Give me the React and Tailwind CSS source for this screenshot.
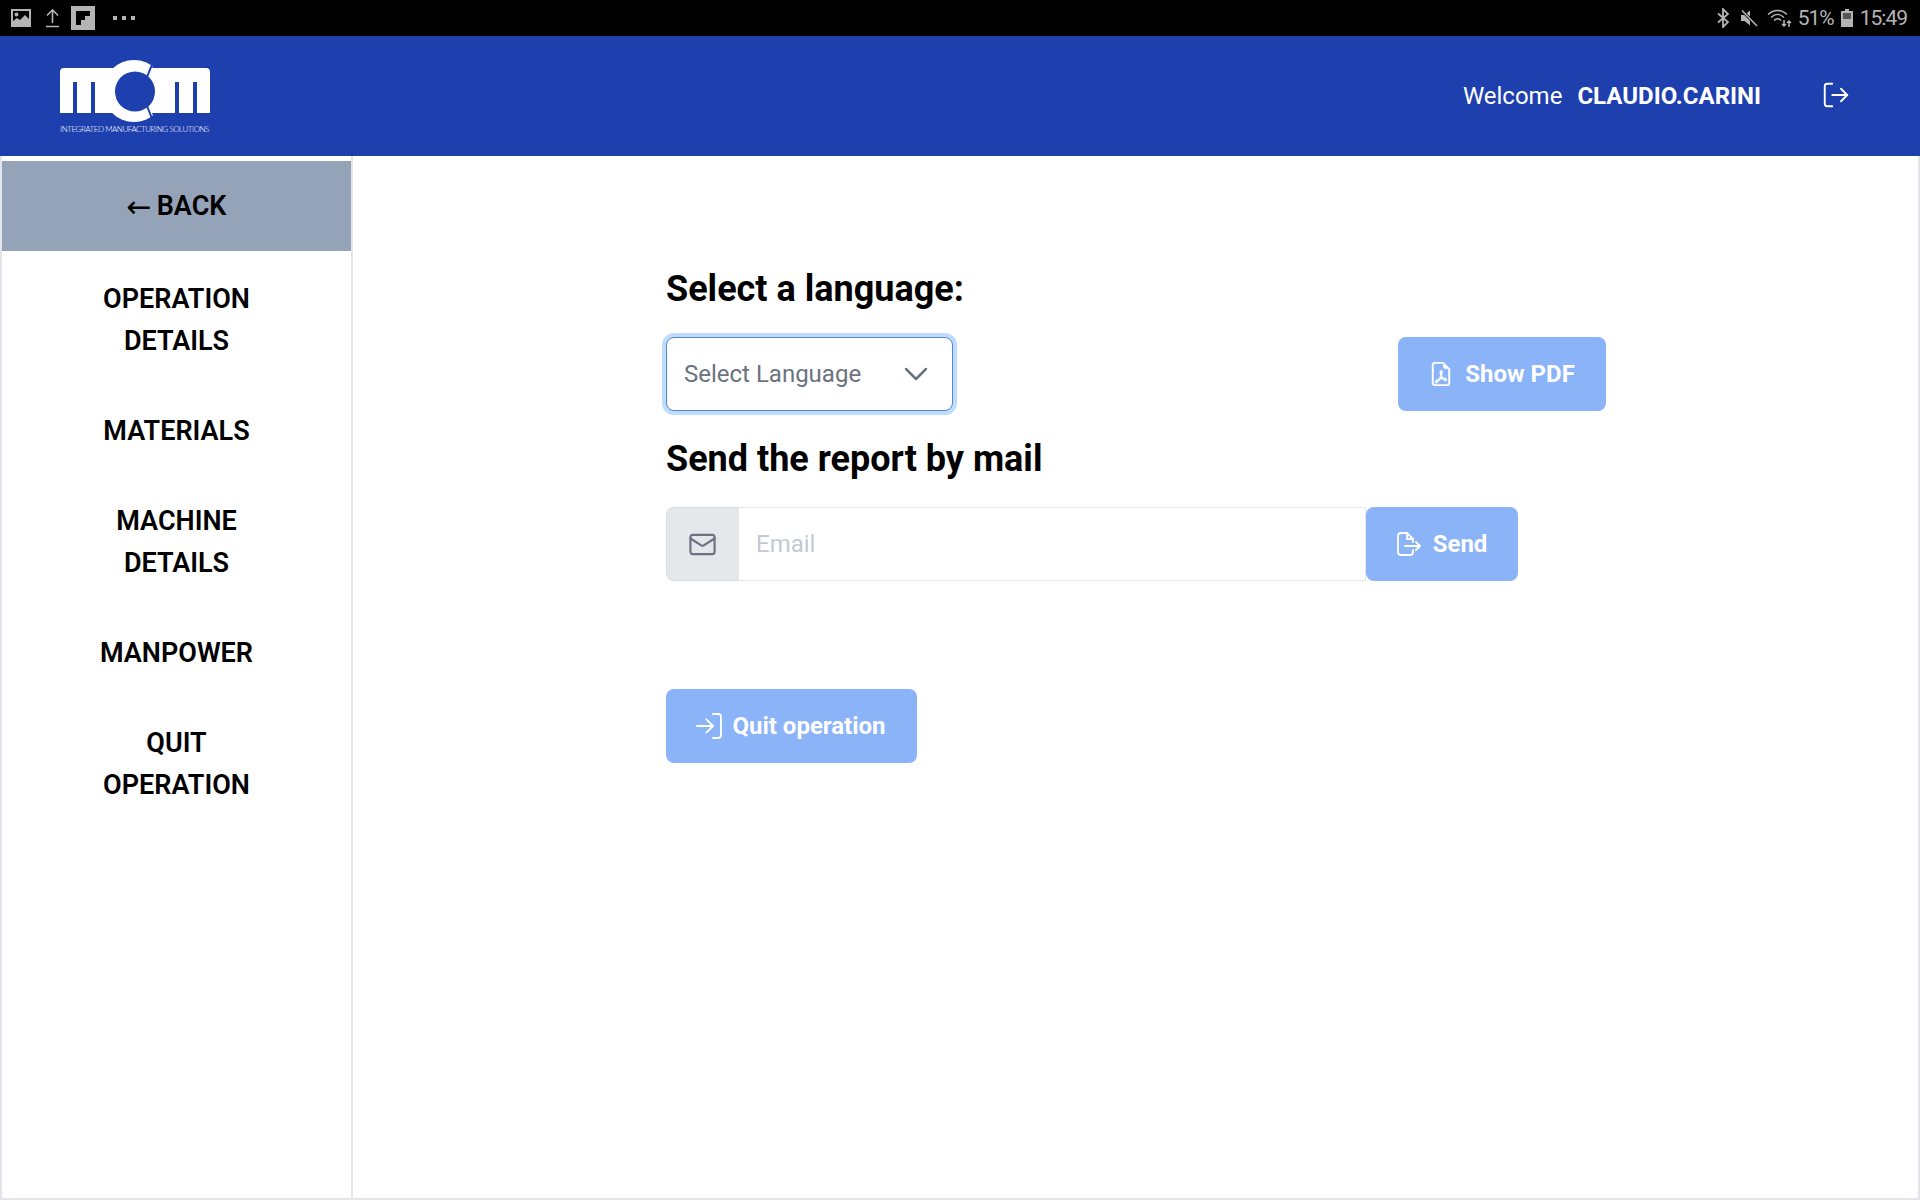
import React from 'react';
import { ChevronDown, LogIn, LogOut, Mail } from 'lucide-react';
import { BsFileEarmarkPdf } from 'react-icons/bs';

const MENU = [
  ['OPERATION', 'DETAILS'],
  ['MATERIALS'],
  ['MACHINE', 'DETAILS'],
  ['MANPOWER'],
  ['QUIT', 'OPERATION'],
];

const StatusBar = () => (
  <div className="h-9 bg-black flex items-center justify-between pl-[11px] pr-[13px] text-[#b4b4b4] text-[21px]">
    <div className="flex items-center">
      <svg width="20" height="20" viewBox="0 0 20 20" fill="#b4b4b4">
        <path fillRule="evenodd" d="M0 1h20v18H0zM2 3v10l4-3 3 2 5-5 4 4V3zM5.500 4.500a2 2 0 1 1 0 4 2 2 0 0 1 0-4z" />
      </svg>
      <svg className="ml-[14px]" width="15" height="20" viewBox="0 0 15 20" fill="none" stroke="#b4b4b4" strokeWidth="1.600">
        <path d="M7.500 15V2M2 7.500 7.500 2 13 7.500M1 18.500h13" />
      </svg>
      <svg className="ml-[11px]" width="24" height="24" viewBox="0 0 24 24">
        <rect width="24" height="24" fill="#b4b4b4" />
        <path d="M5 5h14v5h-5v4h-4v5H5z" fill="#000" />
      </svg>
      <div className="ml-[18px] flex gap-[5px]">
        <span className="w-[4px] h-[4px] bg-[#b4b4b4]" />
        <span className="w-[4px] h-[4px] bg-[#b4b4b4]" />
        <span className="w-[4px] h-[4px] bg-[#b4b4b4]" />
      </div>
    </div>
    <div className="flex items-center font-['Roboto',sans-serif] leading-none tracking-[-1px]">
      <svg width="12" height="20" viewBox="0 0 12 20" fill="none" stroke="#b4b4b4" strokeWidth="1.800">
        <path d="M1 5.500 11 14l-5 5V1l5 5-10 8.500" />
      </svg>
      <svg className="ml-[11px]" width="18" height="18" viewBox="0 0 18 18">
        <path d="M1 6h3.500L10 1.500v15L4.500 12H1z" fill="#b4b4b4" />
        <path d="M2 1.500 17 17" stroke="#000" strokeWidth="3" />
        <path d="M2 1.500 17 17" stroke="#b4b4b4" strokeWidth="1.600" />
      </svg>
      <svg className="ml-[9px]" width="25" height="20" viewBox="0 0 25 20" fill="none" stroke="#b4b4b4" strokeWidth="1.500">
        <path d="M1 6.500c5.500-5.500 13.500-5.500 19 0M4 9.500c4-4 9-4 13 0M7 12.500c2.500-2.500 4.500-2.500 7 0" />
        <path d="M10.500 15.500v.1" strokeWidth="3" />
        <path d="M17 12v6M15 16l2 2 2-2M22 19v-6M20 15l2-2 2 2" />
      </svg>
      <span className="ml-[6px]">51%</span>
      <svg className="ml-[7px]" width="12" height="18" viewBox="0 0 12 18">
        <path d="M4 0h4v2h4v16H0V2h4z" fill="#b4b4b4" />
        <rect x="2" y="4" width="8" height="6" fill="#555" />
      </svg>
      <span className="ml-[7px]">15:49</span>
    </div>
  </div>
);

const Logo = () => (
  <div className="w-[150px] pt-[3px]">
    <svg className="block" width="150" height="62" viewBox="0 0 150 62">
      <path d="M0 12a4 4 0 0 1 4-4h142a4 4 0 0 1 4 4v41H0z" fill="#fff" />
      <circle cx="74" cy="31" r="31" fill="#fff" />
      <path d="M92 8 95 0h20v8zM92 53l3 9h20v-9z" fill="#1e40af" />
      <circle cx="75" cy="31.500" r="20" fill="#1e40af" />
      <path d="M13 22h4v32h-4zM31 22h4v32h-4zM115 22h4v32h-4zM133 22h4v32h-4z" fill="#1e40af" />
      <path d="M87 17 93 2M87 46l6 15" stroke="#1e40af" strokeWidth="2" />
    </svg>
    <div className="mt-[1px] text-[8px] leading-[12px] text-white font-light font-['Lato',sans-serif] whitespace-nowrap tracking-[-0.450px]">
      INTEGRATED MANUFACTURING SOLUTIONS
    </div>
  </div>
);

const SendIcon = () => (
  <svg className="mr-[12px]" width="24" height="24" viewBox="0 0 24 24" fill="none" stroke="currentColor" strokeWidth="1.800" strokeLinecap="round" strokeLinejoin="round">
    <path d="M16 10V7l-6-6H4a3 3 0 0 0-3 3v16a3 3 0 0 0 3 3h9a3 3 0 0 0 3-3v-2" />
    <path d="M10 1v6h6M8 14h15M19 10l4 4-4 4" />
  </svg>
);

const ActionButton = ({ icon, label, className }) => (
  <button className={`h-[74px] bg-[#8ab3f8] rounded-lg text-white text-2xl font-bold flex items-center justify-center ${className}`}>
    {icon}
    {label}
  </button>
);

export default function App() {
  return (
    <div className="min-h-[1200px] flex flex-col bg-white text-black font-['Roboto',sans-serif]">
      <StatusBar />
      <header className="h-[120px] bg-[#1e40af] flex items-center justify-between pl-[60px] pr-[69px] text-white text-2xl">
        <Logo />
        <div className="flex items-center">
          <span>Welcome</span>
          <span className="ml-[15px] font-bold">CLAUDIO.CARINI</span>
          <LogOut className="ml-[60px] mb-[3px]" size={30} strokeWidth={1.500} />
        </div>
      </header>
      <div className="flex-1 flex border-x-2 border-b-2 border-[#e4e4ea]">
        <aside className="w-[351px] border-r-2 border-[#e5e5e5] pt-[5px]">
          <button className="w-full h-[90px] bg-[#94a3b8] text-[27px] font-semibold flex items-center justify-center">
            <span className="mr-[5px] text-[30px] font-normal font-['DejaVu_Sans',sans-serif]">←</span>
            BACK
          </button>
          <nav className="pt-[3px]">
            {MENU.map((lines) => (
              <div key={lines[0]} className="py-6 text-center text-[27px] font-semibold leading-[42px]">
                {lines.map((line) => (
                  <div key={line}>{line}</div>
                ))}
              </div>
            ))}
          </nav>
        </aside>
        <main className="flex-1 pl-[313px] pt-[106px]">
          <h2 className="text-[36px] font-bold leading-[54px]">Select a language:</h2>
          <div className="mt-[21px] w-[940px] flex justify-between">
            <div className="w-[287px] h-[74px] bg-white border border-[#4f86d8] rounded-lg ring-4 ring-[#bfdbfe] flex items-center justify-between pl-[17px] pr-[16px] text-2xl text-[#6b7280]">
              <span>Select Language</span>
              <ChevronDown size={40} strokeWidth={1.500} />
            </div>
            <ActionButton
              className="w-[208px]"
              label="Show PDF"
              icon={<BsFileEarmarkPdf className="mr-[12px]" size={24} stroke="currentColor" strokeWidth={0.300} />}
            />
          </div>
          <h2 className="mt-[21px] text-[36px] font-bold leading-[54px]">Send the report by mail</h2>
          <div className="mt-[21px] w-[852px] flex">
            <div className="w-[72px] h-[74px] bg-[#e5e7eb] border border-r-0 border-[#d8dbe0] rounded-l-lg flex items-center justify-center text-[#6b7280]">
              <Mail size={29} strokeWidth={1.800} />
            </div>
            <input
              className="w-[628px] h-[74px] border border-[#e5e7eb] px-[17px] text-2xl outline-none placeholder:text-[#c4c9d4]"
              placeholder="Email"
            />
            <ActionButton className="w-[152px]" label="Send" icon={<SendIcon />} />
          </div>
          <ActionButton
            className="mt-[108px] w-[251px] pr-1"
            label="Quit operation"
            icon={<LogIn className="mr-[7px]" size={32} strokeWidth={1.400} />}
          />
        </main>
      </div>
    </div>
  );
}
